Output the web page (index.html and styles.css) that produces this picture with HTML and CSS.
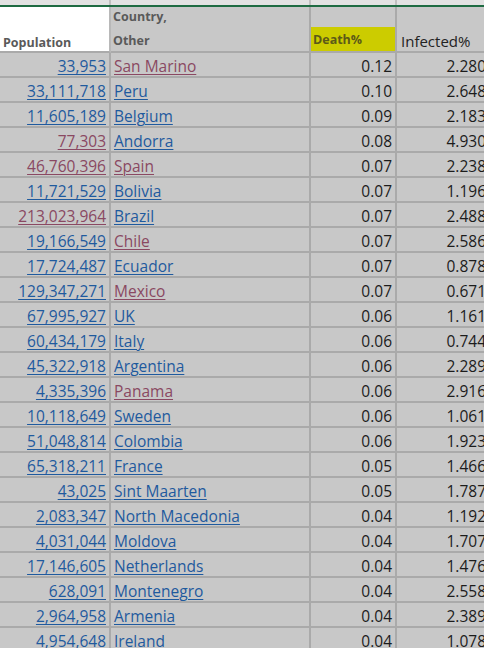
FILE: index.html
```html
<!DOCTYPE html>
<html>
<head>
<meta charset="utf-8">
<link rel="stylesheet" href="styles.css">
</head>
<body>
<div class="frame">
  <div class="strip">
    <div class="sc c1"></div><div class="sc c2"></div><div class="sc c3"></div><div class="sc c4"></div>
  </div>
  <div class="sheet">
    <div class="cell hpop">Population</div>
    <div class="cell hcountry"><span>Country,</span><span>Other</span></div>
    <div class="cell hdeath"><span class="yellow">Death%</span></div>
    <div class="cell hinf">Infected%</div>

    <div class="cell num"><a class="lk">33,953</a></div><div class="cell name"><a class="lk v">San Marino</a></div><div class="cell val">0.12</div><div class="cell val4">2.280</div>
    <div class="cell num"><a class="lk">33,111,718</a></div><div class="cell name"><a class="lk">Peru</a></div><div class="cell val">0.10</div><div class="cell val4">2.648</div>
    <div class="cell num"><a class="lk">11,605,189</a></div><div class="cell name"><a class="lk">Belgium</a></div><div class="cell val">0.09</div><div class="cell val4">2.183</div>
    <div class="cell num"><a class="lk v">77,303</a></div><div class="cell name"><a class="lk">Andorra</a></div><div class="cell val">0.08</div><div class="cell val4">4.930</div>
    <div class="cell num"><a class="lk v">46,760,396</a></div><div class="cell name"><a class="lk v">Spain</a></div><div class="cell val">0.07</div><div class="cell val4">2.238</div>
    <div class="cell num"><a class="lk">11,721,529</a></div><div class="cell name"><a class="lk">Bolivia</a></div><div class="cell val">0.07</div><div class="cell val4">1.196</div>
    <div class="cell num"><a class="lk v">213,023,964</a></div><div class="cell name"><a class="lk">Brazil</a></div><div class="cell val">0.07</div><div class="cell val4">2.488</div>
    <div class="cell num"><a class="lk">19,166,549</a></div><div class="cell name"><a class="lk v">Chile</a></div><div class="cell val">0.07</div><div class="cell val4">2.586</div>
    <div class="cell num"><a class="lk">17,724,487</a></div><div class="cell name"><a class="lk">Ecuador</a></div><div class="cell val">0.07</div><div class="cell val4">0.878</div>
    <div class="cell num"><a class="lk">129,347,271</a></div><div class="cell name"><a class="lk v">Mexico</a></div><div class="cell val">0.07</div><div class="cell val4">0.671</div>
    <div class="cell num"><a class="lk">67,995,927</a></div><div class="cell name"><a class="lk">UK</a></div><div class="cell val">0.06</div><div class="cell val4">1.161</div>
    <div class="cell num"><a class="lk">60,434,179</a></div><div class="cell name"><a class="lk">Italy</a></div><div class="cell val">0.06</div><div class="cell val4">0.744</div>
    <div class="cell num"><a class="lk">45,322,918</a></div><div class="cell name"><a class="lk">Argentina</a></div><div class="cell val">0.06</div><div class="cell val4">2.289</div>
    <div class="cell num"><a class="lk">4,335,396</a></div><div class="cell name"><a class="lk v">Panama</a></div><div class="cell val">0.06</div><div class="cell val4">2.916</div>
    <div class="cell num"><a class="lk">10,118,649</a></div><div class="cell name"><a class="lk">Sweden</a></div><div class="cell val">0.06</div><div class="cell val4">1.061</div>
    <div class="cell num"><a class="lk">51,048,814</a></div><div class="cell name"><a class="lk">Colombia</a></div><div class="cell val">0.06</div><div class="cell val4">1.923</div>
    <div class="cell num"><a class="lk">65,318,211</a></div><div class="cell name"><a class="lk">France</a></div><div class="cell val">0.05</div><div class="cell val4">1.466</div>
    <div class="cell num"><a class="lk">43,025</a></div><div class="cell name"><a class="lk">Sint Maarten</a></div><div class="cell val">0.05</div><div class="cell val4">1.787</div>
    <div class="cell num"><a class="lk">2,083,347</a></div><div class="cell name"><a class="lk">North Macedonia</a></div><div class="cell val">0.04</div><div class="cell val4">1.192</div>
    <div class="cell num"><a class="lk">4,031,044</a></div><div class="cell name"><a class="lk">Moldova</a></div><div class="cell val">0.04</div><div class="cell val4">1.707</div>
    <div class="cell num"><a class="lk">17,146,605</a></div><div class="cell name"><a class="lk">Netherlands</a></div><div class="cell val">0.04</div><div class="cell val4">1.476</div>
    <div class="cell num"><a class="lk">628,091</a></div><div class="cell name"><a class="lk">Montenegro</a></div><div class="cell val">0.04</div><div class="cell val4">2.558</div>
    <div class="cell num"><a class="lk">2,964,958</a></div><div class="cell name"><a class="lk">Armenia</a></div><div class="cell val">0.04</div><div class="cell val4">2.389</div>
    <div class="cell num"><a class="lk">4,954,648</a></div><div class="cell name"><a class="lk">Ireland</a></div><div class="cell val">0.04</div><div class="cell val4">1.078</div>
  </div>
</div>
</body>
</html>
```

FILE: styles.css
```css
html, body {
  margin: 0;
  padding: 0;
  background: #ffffff;
}

.frame {
  width: 484px;
  height: 648px;
  overflow: hidden;
  background: #c8c8c8;
  font-family: "Open Sans", "Noto Sans", sans-serif;
}

.strip {
  display: grid;
  grid-template-columns: 111px 200px 86px 110px;
  height: 5px;
  border-bottom: 2px solid #1e6b42;
  background: #e2e2e2;
}

.sc {
  border-right: 2px solid #c0c0c0;
}

.sheet {
  display: grid;
  grid-template-columns: 111px 200px 86px 92px;
  grid-auto-rows: 25px;
  grid-template-rows: 46px;
}

.cell {
  box-sizing: border-box;
  border-right: 2px solid #aaaaaa;
  border-bottom: 2px solid #aaaaaa;
  white-space: nowrap;
  overflow: visible;
  font-size: 15.5px;
  line-height: 20px;
  padding-top: 3px;
  color: #1c1c1c;
}

.hpop {
  background: #ffffff;
  border-right-color: #b8b8b8;
  font-size: 12.5px;
  font-weight: bold;
  color: #5a5a5a;
  display: flex;
  align-items: flex-end;
  padding: 0 0 0 3px;
  line-height: 16px;
}

.hcountry {
  display: flex;
  flex-direction: column;
  justify-content: space-between;
  font-size: 12.5px;
  font-weight: bold;
  color: #5a5a5a;
  line-height: 18px;
  padding: 1px 0 1px 2px;
}

.hdeath {
  display: flex;
  align-items: flex-end;
  padding-top: 0;
}

.yellow {
  display: block;
  width: 100%;
  height: 24px;
  margin-top: auto;
  background: #cccc00;
  color: #5c5a18;
  font-size: 12.5px;
  font-weight: bold;
  line-height: 20px;
  padding: 3px 0 0 2px;
  box-sizing: border-box;
}

.hinf {
  display: flex;
  align-items: flex-end;
  padding: 0 0 0 4px;
  font-size: 15px;
  color: #222222;
}

.num {
  text-align: right;
  padding-right: 3px;
}

.name {
  padding-left: 3px;
}

.val {
  text-align: right;
  padding-right: 3px;
}

.val4 {
  text-align: right;
  padding-right: 3px;
  border-right: none;
}

.lk {
  color: #1f5a9e;
  text-decoration: underline;
  text-decoration-thickness: 1px;
  text-underline-offset: 2px;
}

.lk.v {
  color: #8a4862;
}
```
